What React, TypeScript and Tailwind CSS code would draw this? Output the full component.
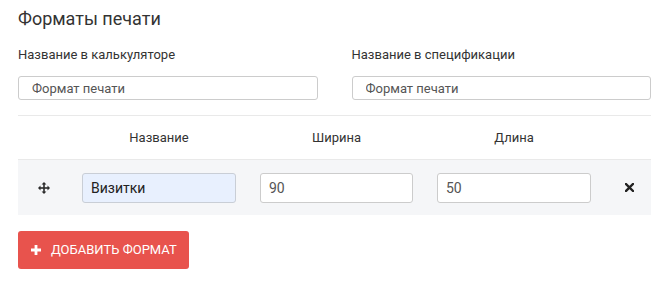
import type { ReactNode } from "react";

const font = { fontFamily: "Roboto, 'Liberation Sans', sans-serif" };

export default function App() {
  return (
    <div className="min-h-screen bg-white px-[18px] pt-[7px] text-[#333]" style={font}>
      <h2 className="text-[18px] leading-[24px] font-normal text-[#333]">Форматы печати</h2>

      <div className="mt-[16px] grid grid-cols-2 gap-[34px]">
        <Field label="Название в калькуляторе" value="Формат печати" />
        <Field label="Название в спецификации" value="Формат печати" />
      </div>

      <div className="mt-[15px] border-t border-[#e9e9e9]">
        <div className="grid h-[43px] grid-cols-[52px_178px_177px_178px_52px] items-center text-[13px] text-[#333]">
          <span />
          <span className="text-center">Название</span>
          <span className="text-center">Ширина</span>
          <span className="text-center">Длина</span>
          <span />
        </div>
        <div className="grid h-[56px] grid-cols-[52px_178px_177px_178px_52px] items-center border-t border-[#e9e9e9] bg-[#f5f6f8]">
          <Cell>
            <MoveIcon />
          </Cell>
          <div className="px-3">
            <input
              readOnly
              value="Визитки"
              className="h-[30px] w-full rounded-[3px] border border-[#c9ced6] bg-[#e8f0fe] px-[8px] text-[14px] text-[#222] outline-none"
            />
          </div>
          <div className="px-3">
            <input
              readOnly
              value="90"
              className="h-[30px] w-full rounded-[3px] border border-[#ccc] bg-white px-[8px] text-[14px] text-[#555] outline-none"
            />
          </div>
          <div className="px-3">
            <input
              readOnly
              value="50"
              className="h-[30px] w-full rounded-[3px] border border-[#ccc] bg-white px-[8px] text-[14px] text-[#555] outline-none"
            />
          </div>
          <Cell>
            <CloseIcon />
          </Cell>
        </div>
      </div>

      <button className="mt-[16px] flex h-[38px] items-center gap-[10px] rounded-[3px] bg-[#e8534d] pl-[13px] pr-[12px] text-[13px] font-normal uppercase text-white">
        <svg width="10" height="10" viewBox="0 0 10 10">
          <path d="M3.6 0h2.8v3.6H10v2.8H6.4V10H3.6V6.4H0V3.6h3.6z" fill="white" />
        </svg>
        Добавить формат
      </button>
    </div>
  );
}

function Field({ label, value }: { label: string; value: string }) {
  return (
    <div>
      <div className="text-[13px] leading-[16px] text-[#333]">{label}</div>
      <input
        readOnly
        value={value}
        className="mt-[13px] h-[24px] w-full rounded-[3px] border border-[#ccc] bg-white px-[13px] text-[13px] text-[#555] outline-none"
      />
    </div>
  );
}

function Cell({ children }: { children: ReactNode }) {
  return <div className="flex items-center justify-center">{children}</div>;
}

function MoveIcon() {
  return (
    <svg width="12" height="12" viewBox="0 0 12 12" fill="#2b2b2b">
      <rect x="5.2" y="1.5" width="1.6" height="9" />
      <rect x="1.5" y="5.2" width="9" height="1.6" />
      <path d="M6 0l2.4 2.5H3.6z" />
      <path d="M6 12l2.4-2.5H3.6z" />
      <path d="M0 6l2.5-2.4v4.8z" />
      <path d="M12 6l-2.5-2.4v4.8z" />
    </svg>
  );
}

function CloseIcon() {
  return (
    <svg width="9" height="9" viewBox="0 0 9 9">
      <path d="M1 1l7 7M8 1L1 8" stroke="#222" strokeWidth="2.4" strokeLinecap="square" />
    </svg>
  );
}
